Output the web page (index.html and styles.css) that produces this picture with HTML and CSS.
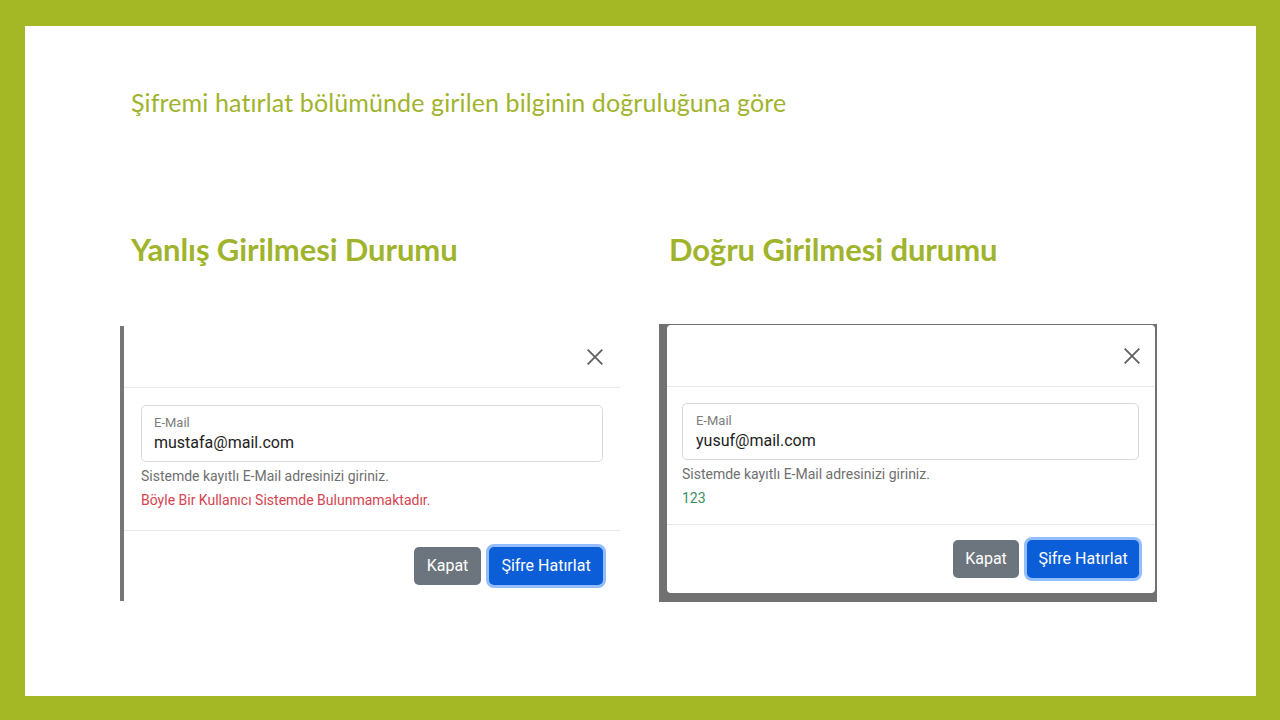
FILE: index.html
```html
<!DOCTYPE html>
<html lang="tr">
<head>
<meta charset="utf-8">
<link rel="stylesheet" href="styles.css">
</head>
<body>
<div class="slide">
  <h1 class="title">Şifremi hatırlat bölümünde girilen bilginin doğruluğuna göre</h1>
  <div class="cols">
    <section class="col">
      <h2 class="heading">Yanlış Girilmesi Durumu</h2>
      <div class="shot shot-left">
        <div class="modal">
          <div class="m-header">
            <svg class="close" viewBox="0 0 16 16" width="18" height="18"><path d="M1.5 1.5 L14.5 14.5 M14.5 1.5 L1.5 14.5" stroke="#5f5f5f" stroke-width="1.6" fill="none"/></svg>
          </div>
          <div class="m-body">
            <div class="field">
              <span class="f-label">E-Mail</span>
              <span class="f-value">mustafa@mail.com</span>
            </div>
            <div class="help">Sistemde kayıtlı E-Mail adresinizi giriniz.</div>
            <div class="msg msg-error">Böyle Bir Kullanıcı Sistemde Bulunmamaktadır.</div>
          </div>
          <div class="m-footer">
            <span class="btn btn-gray">Kapat</span>
            <span class="btn btn-blue">Şifre Hatırlat</span>
          </div>
        </div>
      </div>
    </section>
    <section class="col">
      <h2 class="heading">Doğru Girilmesi durumu</h2>
      <div class="shot shot-right">
        <div class="modal">
          <div class="m-header">
            <svg class="close" viewBox="0 0 16 16" width="18" height="18"><path d="M1.5 1.5 L14.5 14.5 M14.5 1.5 L1.5 14.5" stroke="#5f5f5f" stroke-width="1.6" fill="none"/></svg>
          </div>
          <div class="m-body">
            <div class="field">
              <span class="f-label">E-Mail</span>
              <span class="f-value">yusuf@mail.com</span>
            </div>
            <div class="help">Sistemde kayıtlı E-Mail adresinizi giriniz.</div>
            <div class="msg msg-ok">123</div>
          </div>
          <div class="m-footer">
            <span class="btn btn-gray">Kapat</span>
            <span class="btn btn-blue">Şifre Hatırlat</span>
          </div>
        </div>
      </div>
    </section>
  </div>
</div>
</body>
</html>
```

FILE: styles.css
```css
html, body {
  margin: 0;
  padding: 0;
  background: #a4b725;
}
body {
  width: 1280px;
  height: 720px;
  overflow: hidden;
}
.slide {
  box-sizing: border-box;
  margin: 26px 24px 0 25px;
  width: 1231px;
  height: 670px;
  background: #ffffff;
  padding-left: 95px;
  font-family: Lato, "Open Sans", sans-serif;
}
.title {
  margin: 0;
  padding: 61px 0 0 11px;
  font-size: 25px;
  font-weight: 400;
  line-height: 30px;
  color: #9fb42c;
  letter-spacing: 0.12px;
}
.cols {
  display: grid;
  grid-template-columns: 500px 498px;
  column-gap: 39px;
  margin-top: 114px;
}
.col {
  display: flex;
  flex-direction: column;
}
.heading {
  margin: 0;
  padding-left: 11px;
  height: 93px;
  font-size: 31px;
  font-weight: 700;
  line-height: 36px;
  color: #9fb42c;
  letter-spacing: -0.1px;
}
.col:last-child .heading { padding-left: 10px; }

.shot {
  font-family: Roboto, "Liberation Sans", sans-serif;
  box-sizing: border-box;
}
.shot-left {
  margin-top: 2px;
  width: 500px;
  height: 275px;
  border-left: 4px solid #777777;
  background: #fff;
}
.shot-right {
  width: 498px;
  height: 278px;
  background: #717171;
  padding: 1px 2px 9px 8px;
}
.shot-right .modal {
  background: #fff;
  border-radius: 4px;
  height: 100%;
}
.m-header {
  height: 62px;
  border-bottom: 1px solid #e6e8ea;
  display: flex;
  align-items: center;
  justify-content: flex-end;
  box-sizing: border-box;
  padding-right: 16px;
}
.shot-right .m-header { padding-right: 14px; }
.close { display: block; }

.m-body {
  padding: 17px 17px 0 17px;
  height: 143px;
  box-sizing: border-box;
  border-bottom: 1px solid #e6e8ea;
}
.shot-right .m-body { padding: 16px 16px 0 15px; height: 138px; }

.field {
  box-sizing: border-box;
  height: 57px;
  border: 1px solid #d6d9dc;
  border-radius: 5px;
  padding: 9px 12px 0 12px;
  display: flex;
  flex-direction: column;
}
.shot-right .field { height: 57px; padding-left: 13px; }
.f-label {
  font-size: 13px;
  line-height: 16px;
  color: #7d7d7d;
}
.f-value {
  font-size: 16px;
  line-height: 22px;
  margin-top: 1px;
  color: #222;
}
.help {
  margin-top: 4px;
  font-size: 14px;
  line-height: 21px;
  color: #6f6f6f;
}
.msg {
  margin-top: 3px;
  font-size: 14px;
  line-height: 21px;
}
.msg-error { color: #d6434f; }
.msg-ok { color: #3b8f61; }

.m-footer {
  display: flex;
  justify-content: flex-end;
  align-items: flex-start;
  gap: 8px;
  padding: 16px 17px 0 0;
}
.shot-right .m-footer { padding: 15px 16px 0 0; }
.btn {
  box-sizing: border-box;
  height: 38px;
  border-radius: 5px;
  color: #fff;
  font-size: 16px;
  line-height: 38px;
  padding: 0 12px;
}
.btn-gray {
  background: #6c757d;
  width: 67px;
  text-align: center;
  padding: 0;
}
.shot-right .btn-gray { width: 66px; }
.btn-blue {
  background: #0b5ed7;
  box-shadow: 0 0 0 3px #93bdfb;
  width: 114px;
  text-align: center;
  padding: 0;
}
.shot-right .btn-blue { width: 112px; }
```
